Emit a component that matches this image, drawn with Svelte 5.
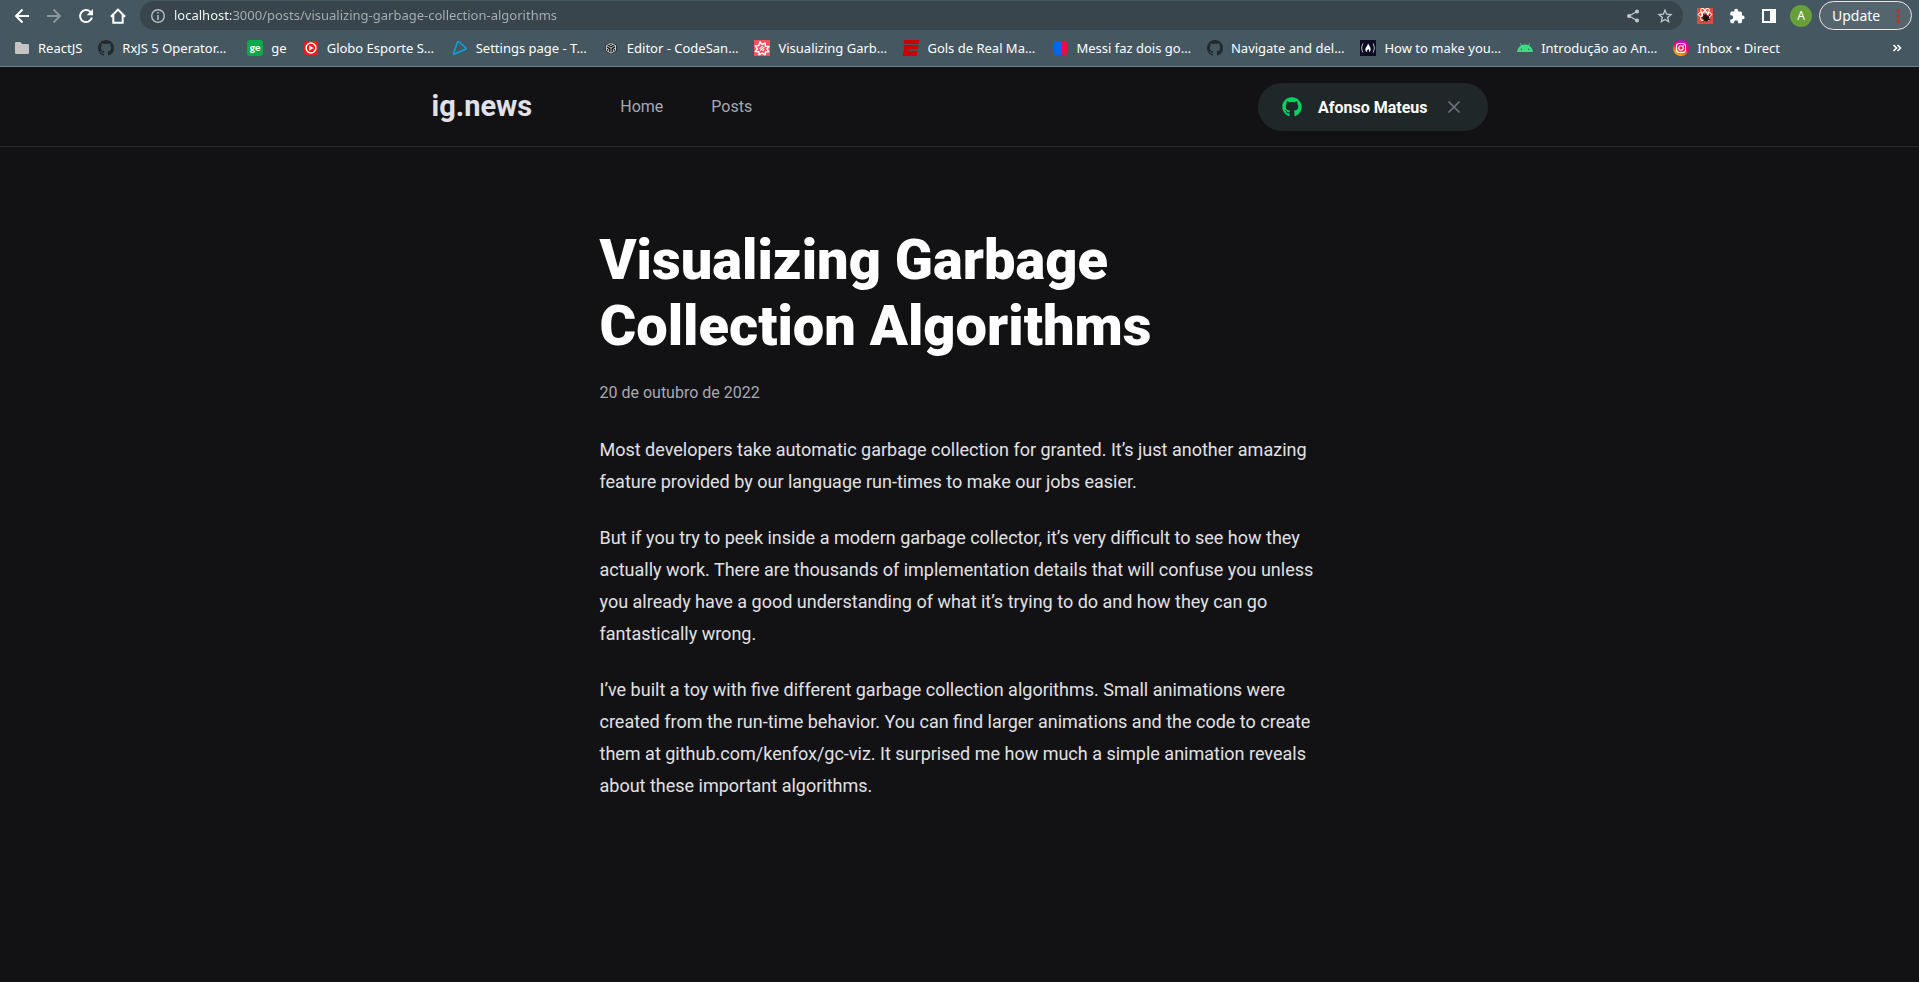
<script lang="ts">
  const bookmarks = [
    { icon: 'folder', label: 'ReactJS' },
    { icon: 'octocat', label: 'RxJS 5 Operator…' },
    { icon: 'ge', label: 'ge' },
    { icon: 'globo', label: 'Globo Esporte S…' },
    { icon: 'triangle', label: 'Settings page - T…' },
    { icon: 'cube', label: 'Editor - CodeSan…' },
    { icon: 'star', label: 'Visualizing Garb…' },
    { icon: 'espn', label: 'Gols de Real Ma…' },
    { icon: 'split', label: 'Messi faz dois go…' },
    { icon: 'octocat', label: 'Navigate and del…' },
    { icon: 'camp', label: 'How to make you…' },
    { icon: 'android', label: 'Introdução ao An…' },
    { icon: 'instagram', label: 'Inbox • Direct' }
  ];

  const paragraphs = [
    'Most developers take automatic garbage collection for granted. It’s just another amazing feature provided by our language run-times to make our jobs easier.',
    'But if you try to peek inside a modern garbage collector, it’s very difficult to see how they actually work. There are thousands of implementation details that will confuse you unless you already have a good understanding of what it’s trying to do and how they can go fantastically wrong.',
    'I’ve built a toy with five different garbage collection algorithms. Small animations were created from the run-time behavior. You can find larger animations and the code to create them at github.com/kenfox/gc-viz. It surprised me how much a simple animation reveals about these important algorithms.'
  ];

  let address = $state('localhost:3000/posts/visualizing-garbage-collection-algorithms');
</script>

{#snippet favicon(name: string)}
  <svg class="favicon" viewBox="0 0 16 16" aria-hidden="true">
    {#if name === 'folder'}
      <path fill="#c6c3c3" d="M1 3.2Q1 2 2.2 2h4.2l1.8 2h5.6Q15 4 15 5.2v7.6q0 1.200-1.200 1.200H2.200Q1 14 1 12.800z" />
    {:else if name === 'octocat'}
      <path fill="#24292e" d="M8 0C3.58 0 0 3.58 0 8c0 3.54 2.29 6.53 5.47 7.59.4.07.55-.17.55-.38 0-.19-.01-.82-.01-1.49-2.01.37-2.53-.49-2.69-.94-.09-.23-.48-.94-.82-1.13-.28-.15-.68-.52-.01-.53.63-.01 1.08.58 1.23.82.72 1.21 1.87.87 2.33.66.07-.52.28-.87.51-1.07-1.78-.2-3.64-.89-3.64-3.95 0-.87.31-1.59.82-2.15-.08-.2-.36-1.02.08-2.12 0 0 .67-.21 2.2.82.64-.18 1.32-.27 2-.27s1.36.09 2 .27c1.53-1.04 2.2-.82 2.2-.82.44 1.1.16 1.92.08 2.12.51.56.82 1.27.82 2.15 0 3.07-1.87 3.75-3.65 3.95.29.25.54.73.54 1.48 0 1.07-.01 1.93-.01 2.2 0 .21.15.46.55.38A8.01 8.01 0 0016 8c0-4.42-3.58-8-8-8z" />
    {:else if name === 'ge'}
      <rect width="16" height="16" rx="2.500" fill="#06aa48" />
      <text x="8" y="10.800" text-anchor="middle" font-family="Lato" font-weight="900" font-size="10" fill="#fff">ge</text>
    {:else if name === 'globo'}
      <rect x="1" y="1" width="14" height="14" rx="3" fill="#f51b1b" />
      <circle cx="8" cy="8" r="4.900" fill="none" stroke="#fff" stroke-width="1.500" />
      <path fill="#fff" d="M6.300 5.500 10.700 8l-4.400 2.500z" />
    {:else if name === 'triangle'}
      <path fill="none" stroke="#0aa5dc" stroke-width="1.500" stroke-linejoin="round" d="M5.700 1.800Q6.300 1.200 7 1.800L13.900 8q.6.900-.4 1.300L2.600 14q-1.200.2-1-1z" />
    {:else if name === 'cube'}
      <path fill="#151515" d="M8 2 13.500 5v6.200L8 14.300 2.500 11.200V5z" />
      <path fill="none" stroke="#d8d8d8" stroke-width=".9" d="M8 3 12.500 5.500v5.200L8 13.200l-4.500-2.500V5.500zM8 13.200V8m0 0L3.500 5.500M8 8l4.500-2.500M5.700 4.300 8 5.600l2.300-1.300M3.500 8l2.100 1.200v2.600M12.500 8l-2.100 1.200v2.600" />
    {:else if name === 'star'}
      <rect width="16" height="16" fill="#f9505a" />
      <path fill="none" stroke="#fff" stroke-width="1.500" stroke-linejoin="round" d="m6 1.700 2 2.800 3.200-1.500.2 3.300 3.600.2-2 2.500 1.900 2.800-3.400.3-.5 2.600L8 13.200l-3 1.500-.1-3-3.600-.2 2-2.700L1.400 5.800l3.400-.2z" />
      <path fill="none" stroke="#fff" stroke-width="1.100" d="m5.500 8.800 3-2.600M6.200 10.500l4.200-3.600M8.500 10.800l1.800-1.600" />
    {:else if name === 'espn'}
      <path fill="#c00" d="M1.400 0H16l-.6 4H.8zM.7 5h14.500l-.6 4.500H6.400L6.200 11h8.300l-.7 5H0l1-7z" />
      <path fill="#455760" d="M5.500 9.700h9v1h-9z" />
    {:else if name === 'split'}
      <path fill="#0064f0" d="M3.500 1H10v14H3.500Q1 15 1 12.500v-9Q1 1 3.500 1z" />
      <path fill="#f5083f" d="M10 1h3q2 0 2 2v10q0 2-2 2h-3z" />
    {:else if name === 'camp'}
      <rect width="16" height="16" fill="#0a0a23" />
      <path fill="none" stroke="#bbb" stroke-width="1" d="M2.800 3.500Q.2 8 2.800 12.500M13.200 3.500Q15.800 8 13.200 12.500" />
      <path fill="#fff" d="M8 3c.3 2 2.700 3.400 2.700 6.400 0 1.200-.7 2.100-1.900 2.700.8-1.500.2-2.400-.5-3-.2.800-1 .8-1.300 1.500-.2.600 0 1.100.4 1.600-1.300-.4-2.100-1.400-2.100-2.700C5.300 7 8 6.200 8 3z" />
    {:else if name === 'android'}
      <path fill="#3ddc84" d="M0 12q.5-4.300 4-6.600L2.900 3.300l.5-.3 1.200 2.100Q8 3.700 11.400 5.100L12.600 3l.5.300L12 5.400Q15.500 7.700 16 12z" />
      <circle cx="4.400" cy="9.300" r=".7" fill="#455760" /><circle cx="11.600" cy="9.300" r=".7" fill="#455760" />
    {:else if name === 'instagram'}
      <defs>
        <linearGradient id="insta" x1=".2" y1="1" x2=".65" y2="0">
          <stop offset="0" stop-color="#ffc800" /><stop offset=".3" stop-color="#ff7a00" />
          <stop offset=".55" stop-color="#ff0169" /><stop offset="1" stop-color="#c400d8" />
        </linearGradient>
      </defs>
      <circle cx="8" cy="8" r="8" fill="url(#insta)" />
      <rect x="3.500" y="3.500" width="9" height="9" rx="2.600" fill="none" stroke="#fff" stroke-width="1.100" />
      <circle cx="8" cy="8" r="2.200" fill="none" stroke="#fff" stroke-width="1.100" /><circle cx="10.700" cy="5.300" r=".6" fill="#fff" />
    {/if}
  </svg>
{/snippet}

<div class="page">
  <div class="browser">
    <div class="toolbar">
      <div class="controls">
        <button aria-label="Back"><svg viewBox="0 0 16 16"><path fill="none" stroke="#fff" stroke-width="2" d="M15 8H2.500M8.500 1.500 2 8l6.500 6.500" /></svg></button>
        <button aria-label="Forward"><svg viewBox="0 0 16 16"><path fill="none" stroke="#8b979d" stroke-width="2" d="M1 8h12.500M7.500 1.500 14 8l-6.500 6.500" /></svg></button>
        <button aria-label="Reload"><svg viewBox="0 0 16 16"><path fill="none" stroke="#fff" stroke-width="2" d="M13.900 9.500A6 6 0 1 1 12.200 3.700L13.500 5" /><path fill="#fff" d="M15 1v6.300H8.700z" /></svg></button>
        <button aria-label="Home"><svg viewBox="0 0 16 16"><path fill="none" stroke="#fff" stroke-width="2" d="M.9 8.700 8 1.600l7.100 7.100M3.300 7v7.800h9.400V7" /></svg></button>
      </div>
      <div class="omnibox">
        <svg class="info" viewBox="0 0 16 16"><circle cx="8" cy="8" r="6.300" fill="none" stroke="#b9bfc2" stroke-width="1.400" /><path stroke="#b9bfc2" stroke-width="1.500" d="M8 4v1.600M8 7v5" /></svg>
        <input type="text" aria-label="Address" spellcheck="false" bind:value={address} />
        <button aria-label="Share"><svg viewBox="0 0 16 16"><path fill="none" stroke="#c3c8ca" stroke-width="1.300" d="M12 3.500 4 8l8 4.500" /><g fill="#c3c8ca"><circle cx="12" cy="3.500" r="2" /><circle cx="4" cy="8" r="2" /><circle cx="12" cy="12.500" r="2" /></g></svg></button>
        <button aria-label="Bookmark this page"><svg viewBox="0 0 16 16"><path fill="none" stroke="#c3c8ca" stroke-width="1.300" d="m8 2.200 1.700 4 4.300.4-3.300 2.900 1 4.200L8 11.500l-3.700 2.200 1-4.200L2 6.600l4.300-.4z" /></svg></button>
      </div>
      <div class="controls">
        <button aria-label="React tools"><svg viewBox="0 0 16 16"><rect width="16" height="16" fill="#e04a3b" /><g fill="none" stroke="#fff"><ellipse cx="8" cy="6.500" rx="6.800" ry="2.500" /><ellipse cx="8" cy="6.500" rx="6.800" ry="2.500" transform="rotate(60 8 6.500)" /><ellipse cx="8" cy="6.500" rx="6.800" ry="2.500" transform="rotate(120 8 6.500)" /></g><ellipse cx="9" cy="10" rx="3" ry="3.500" transform="rotate(-40 9 10)" fill="#20120f" /><path stroke="#20120f" d="m4.500 9.500 3 1M6 13.500l2-1.500M13 7l-2 1.500M13.500 12 11 10.500M6.500 6l1 2" /></svg></button>
        <button aria-label="Extensions"><svg viewBox="0 0 16 16"><path fill="#fff" d="M13 7.500V5q0-1.500-1.500-1.500H9.200V2.700a2 2 0 0 0-4 0v.8H2.700Q1.300 3.500 1.300 5v2.300h.8a2.100 2.100 0 0 1 0 4.200h-.8v2.300q0 1.400 1.400 1.400H5v-.8a2.100 2.100 0 0 1 4.200 0v.8h2.300q1.500 0 1.500-1.400v-2.500h.7a1.900 1.900 0 0 0 0-3.800z" /></svg></button>
        <button aria-label="Side panel"><svg viewBox="0 0 16 16"><path fill="#fff" fill-rule="evenodd" d="M1 1h14v14H1zm2 2v10h6V3z" /></svg></button>
        <button aria-label="Profile"><span class="avatar">A</span></button>
      </div>
      <button class="update">Update<svg viewBox="0 0 4 14"><g fill="#e3241b"><circle cx="2" cy="2" r="1.600" /><circle cx="2" cy="7" r="1.600" /><circle cx="2" cy="12" r="1.600" /></g></svg></button>
    </div>
    <nav class="bookmarks" aria-label="Bookmarks">
      {#each bookmarks as item}
        <a href="#top">
          {@render favicon(item.icon)}
          <span class:clipped={item.label.endsWith('…')}>{item.label}</span>
        </a>
      {/each}
      <button aria-label="More bookmarks"><svg viewBox="0 0 16 16"><path fill="none" stroke="#fff" stroke-width="1.600" d="m4.500 5 3 3-3 3M8.500 5l3 3-3 3" /></svg></button>
    </nav>
  </div>

  <header id="top">
    <div class="header-content">
      <a class="logo" href="#top">ig.news</a>
      <nav>
        <a href="#top">Home</a>
        <a href="#top">Posts</a>
      </nav>
      <button class="sign-in">
        <svg class="github" viewBox="0 0 496 512" fill="#04d361"><path d="M165.900 397.400c0 2-2.300 3.600-5.200 3.600-3.300.3-5.600-1.300-5.600-3.600 0-2 2.300-3.600 5.200-3.600 3-.3 5.600 1.300 5.600 3.600zm-31.100-4.500c-.7 2 1.300 4.300 4.300 4.900 2.600 1 5.600 0 6.200-2s-1.300-4.300-4.300-5.200c-2.600-.7-5.500.3-6.200 2.300zm44.200-1.700c-2.900.7-4.900 2.600-4.600 4.900.3 2 2.900 3.300 5.900 2.600 2.900-.7 4.900-2.600 4.600-4.600-.3-1.900-3-3.200-5.900-2.900zM244.800 8C106.100 8 0 113.300 0 252c0 110.900 69.800 205.800 169.500 239.200 12.800 2.300 17.300-5.600 17.300-12.100 0-6.200-.3-40.400-.3-61.400 0 0-70 15-84.700-29.800 0 0-11.400-29.100-27.800-36.600 0 0-22.900-15.700 1.600-15.400 0 0 24.900 2 38.600 25.800 21.900 38.600 58.600 27.500 72.900 20.900 2.300-16 8.800-27.100 16-33.700-55.900-6.200-112.300-14.300-112.300-110.500 0-27.500 7.600-41.300 23.600-58.900-2.600-6.500-11.100-33.300 2.600-67.900 20.900-6.500 69 27 69 27 20-5.600 41.500-8.500 62.800-8.500s42.800 2.900 62.800 8.500c0 0 48.100-33.600 69-27 13.700 34.700 5.200 61.400 2.600 67.900 16 17.700 25.800 31.500 25.800 58.900 0 96.500-58.900 104.200-114.800 110.500 9.200 7.900 17 22.900 17 46.400 0 33.700-.3 75.400-.3 83.600 0 6.500 4.600 14.400 17.300 12.100C428.200 457.800 496 362.900 496 252 496 113.300 383.500 8 244.800 8z" /></svg>
        Afonso Mateus
        <svg class="close" viewBox="0 0 24 24" fill="none" stroke="#737380" stroke-width="2" stroke-linecap="round"><path d="M18 6 6 18M6 6l12 12" /></svg>
      </button>
    </div>
  </header>

  <main>
    <article>
      <h1>Visualizing Garbage Collection Algorithms</h1>
      <time datetime="2022-10-20">20 de outubro de 2022</time>
      <div class="content">
        {#each paragraphs as text}
          <p>{text}</p>
        {/each}
      </div>
    </article>
  </main>
</div>

<style>
  :global(body) {
    margin: 0;
    background: #121214;
  }
  .page {
    color: #fff;
    font: 400 16px Roboto, sans-serif;
  }
  .page :global(*) {
    box-sizing: border-box;
  }
  button {
    border: 0;
    padding: 0;
    background: none;
    color: inherit;
    font: inherit;
    cursor: pointer;
  }
  a {
    color: inherit;
    text-decoration: none;
  }
  svg {
    display: block;
    flex: none;
  }

  .browser {
    background: #455760;
    border-bottom: 1px solid #71828b;
    font: 400 13px/18px "Noto Sans", sans-serif;
  }
  .toolbar {
    display: flex;
    align-items: center;
    padding: 1px 7px 0 6px;
  }
  .controls {
    display: flex;
  }
  .controls button {
    display: flex;
    align-items: center;
    justify-content: center;
    width: 32px;
    height: 28px;
  }
  .controls svg,
  .omnibox svg {
    width: 16px;
    height: 16px;
  }
  .omnibox {
    flex: 1;
    display: flex;
    align-items: center;
    gap: 16px;
    height: 29px;
    margin: 0 0 0 6px;
    padding: 0 10px;
    border-radius: 15px;
    background: #39454c;
  }
  .omnibox + .controls {
    margin-left: 6px;
  }
  .omnibox input {
    flex: 1;
    min-width: 0;
    margin-left: -8px;
    border: 0;
    padding: 0 0 2px;
    outline: 0;
    background: linear-gradient(to right, #fff 57px, #a9b0b3 57px);
    background-clip: text;
    color: transparent;
    font: 400 13px/18px "Noto Sans", sans-serif;
  }
  .avatar {
    width: 22px;
    height: 22px;
    border-radius: 50%;
    background: #689f38;
    font-size: 12px;
    line-height: 22px;
    text-align: center;
  }
  .update {
    display: flex;
    align-items: center;
    justify-content: space-between;
    width: 93px;
    height: 29px;
    margin-left: 2px;
    padding: 0 11px 0 12px;
    border: 1px solid #f3e4e6;
    border-radius: 15px;
    background: #54656d;
    font-size: 14px;
  }
  .update svg {
    width: 4px;
    height: 14px;
  }
  .bookmarks {
    display: flex;
    align-items: center;
    gap: 16px;
    height: 36px;
    padding: 0 14px;
  }
  .bookmarks a {
    display: flex;
    align-items: center;
    gap: 8px;
    white-space: nowrap;
  }
  .bookmarks .clipped {
    min-width: 109px;
  }
  .bookmarks button {
    margin-left: auto;
  }
  .favicon,
  .bookmarks button svg {
    width: 16px;
    height: 16px;
  }

  header {
    height: 80px;
    border-bottom: 1px solid #29292e;
  }
  .header-content {
    display: flex;
    align-items: center;
    max-width: 1120px;
    height: 80px;
    margin: 0 auto;
    padding: 0 32px;
  }
  .logo,
  .header-content nav {
    padding-bottom: 2px;
  }
  .logo {
    color: #e1e1e6;
    font-size: 29px;
    font-weight: 700;
  }
  .header-content nav {
    display: flex;
    gap: 48px;
    margin-left: 88px;
    color: #a8a8b3;
  }
  .sign-in {
    display: flex;
    align-items: center;
    height: 48px;
    margin-left: auto;
    padding: 0 24px;
    border-radius: 24px;
    background: #202728;
    font-weight: 700;
  }
  .github {
    width: 20px;
    height: 20px;
    margin-right: 16px;
  }
  .close {
    width: 20px;
    height: 20px;
    margin-left: 16px;
  }

  main {
    max-width: 1120px;
    margin: 0 auto;
    padding: 0 32px;
  }
  article {
    max-width: 720px;
    margin: 80px auto 0;
  }
  h1 {
    margin: 0;
    font-size: 56px;
    font-weight: 900;
    line-height: 66px;
  }
  time {
    display: block;
    margin-top: 24px;
    color: #a8a8b3;
  }
  .content {
    margin-top: 32px;
    color: #e1e1e6;
    font-size: 18px;
    line-height: 32px;
  }
  .content p {
    margin: 24px 0;
  }
</style>
